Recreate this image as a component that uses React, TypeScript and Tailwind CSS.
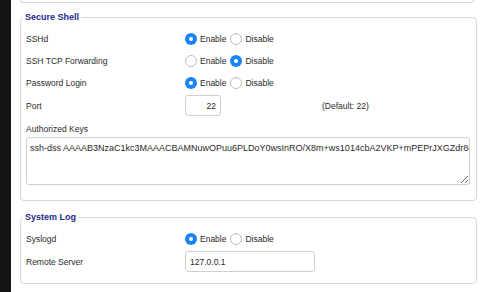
import React from 'react';

const KEY =
  'ssh-dss AAAAB3NzaC1kc3MAAACBAMNuwOPuu6PLDoY0wsInRO/X8m+ws1014cbA2VKP+mPEPrJXGZdr8cQ2mLkV7pT';

function Radio({ checked }: { checked: boolean }) {
  return checked ? (
    <span className="flex h-[12px] w-[12px] shrink-0 items-center justify-center rounded-full bg-[#1b84f4]">
      <span className="h-[4px] w-[4px] rounded-full bg-white" />
    </span>
  ) : (
    <span className="h-[12px] w-[12px] shrink-0 rounded-full border border-[#bdbdbd] bg-white" />
  );
}

function Toggle({ enabled }: { enabled: boolean }) {
  return (
    <div className="flex items-center">
      <Radio checked={enabled} />
      <span className="ml-[3px]">Enable</span>
      <span className="ml-[4px]" />
      <Radio checked={!enabled} />
      <span className="ml-[3px]">Disable</span>
    </div>
  );
}

function Row({ label, h = 'h-[22px]', children }: { label: string; h?: string; children: React.ReactNode }) {
  return (
    <div className={`flex items-center ${h}`}>
      <span className="w-[159px] shrink-0">{label}</span>
      {children}
    </div>
  );
}

function Section({ title, className, children }: { title: string; className: string; children: React.ReactNode }) {
  return (
    <fieldset className={`w-[457px] rounded-[4px] border border-[#d9d9d9] ${className}`}>
      <legend className="ml-[2px] px-[2px] text-[9px] font-bold leading-[12px] text-[#1d2b8c]">{title}</legend>
      {children}
    </fieldset>
  );
}

export default function App() {
  return (
    <div className="flex h-[292px] w-[500px] overflow-hidden bg-white font-['Liberation_Sans',Arial,sans-serif] text-[8.5px] leading-[12px] text-[#2a2a2a]">
      <div className="w-[11px] shrink-0 bg-[#151515]" />
      <div className="flex flex-col pl-[9px]">
        <div className="h-[3px] w-[454px] rounded-b-[4px] border-x border-b border-[#d9d9d9]" />

        <Section title="Secure Shell" className="mt-[8px]">
          <div className="pl-[5px] pt-[5px] pb-[15px]">
            <Row label="SSHd">
              <Toggle enabled />
            </Row>
            <Row label="SSH TCP Forwarding">
              <Toggle enabled={false} />
            </Row>
            <Row label="Password Login">
              <Toggle enabled />
            </Row>
            <Row label="Port" h="h-[23px]">
              <div className="flex h-[21px] w-[36px] items-center justify-end rounded-[3px] border border-[#cfcfcf] pr-[4px]">
                22
              </div>
              <span className="ml-[101px]">(Default: 22)</span>
            </Row>
            <div className="mt-[6px]">Authorized Keys</div>
            <textarea
              readOnly
              wrap="off"
              value={KEY}
              className="mt-[2px] block h-[48px] w-[444px] overflow-hidden rounded-[3px] border border-[#cfcfcf] px-[3px] pt-[4px] text-[9px] leading-[12px] text-[#2a2a2a] outline-none"
            />
          </div>
        </Section>

        <Section title="System Log" className="mt-[10px]">
          <div className="pl-[5px] pt-[5px] pb-[10px]">
            <Row label="Syslogd">
              <Toggle enabled />
            </Row>
            <Row label="Remote Server" h="h-[23px]">
              <div className="flex h-[21px] w-[130px] items-center rounded-[3px] border border-[#cfcfcf] pl-[4px]">
                127.0.0.1
              </div>
            </Row>
          </div>
        </Section>
      </div>
    </div>
  );
}
